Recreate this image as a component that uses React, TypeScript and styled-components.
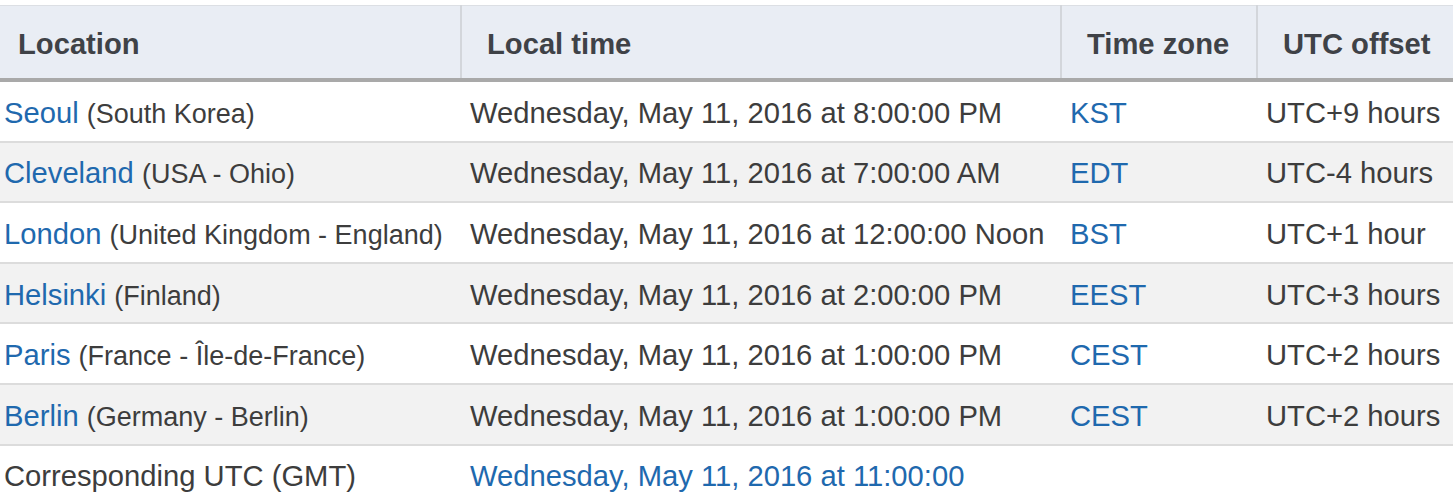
import React from "react";
import styled, { createGlobalStyle } from "styled-components";

const GlobalStyle = createGlobalStyle`
	html, body {
		margin: 0;
		padding: 0;
		background: #ffffff;
		overflow: hidden;
	}
	body {
		font-family: "Liberation Sans", Arial, Helvetica, sans-serif;
	}
`;

const Page = styled.div`
	padding-top: 5px;
	width: 1453px;
	overflow: hidden;
`;

const Table = styled.table`
	border-collapse: collapse;
	table-layout: fixed;
	width: 1480px;
	font-size: 29.2px;
	color: #3d3d3d;
	border-top: 1px solid #dcdfe4;
`;

const HeadCell = styled.th`
	background: #e9edf4;
	color: #3f4247;
	font-weight: bold;
	text-align: left;
	height: 68px;
	padding: 4px 0 0 25px;
	border-left: 2px solid #d3d6db;
	border-bottom: 4px solid #a9a9a9;
	white-space: nowrap;
	vertical-align: middle;

	&:first-child {
		padding-left: 18px;
		border-left: none;
	}
`;

const Row = styled.tr<{ $shaded: boolean }>`
	background: ${(props) => (props.$shaded ? "#f2f2f2" : "#ffffff")};
`;

const Cell = styled.td<{ $last?: boolean }>`
	height: 54.6px;
	padding: 4px 0 0 9px;
	white-space: nowrap;
	vertical-align: middle;
	border-bottom: ${(props) => (props.$last ? "none" : "2px solid #dcdcdc")};
	overflow: hidden;

	&:first-child {
		padding-left: 4px;
	}
`;

const Link = styled.a`
	color: #1f69ae;
	text-decoration: none;
`;

const Country = styled.span`
	font-size: 27px;
	color: #3d3d3d;
`;

interface CityRow {
	city: string;
	country: string;
	time: string;
	zone: string;
	offset: string;
}

const rows: CityRow[] = [
	{ city: "Seoul", country: "(South Korea)", time: "Wednesday, May 11, 2016 at 8:00:00 PM", zone: "KST", offset: "UTC+9 hours" },
	{ city: "Cleveland", country: "(USA - Ohio)", time: "Wednesday, May 11, 2016 at 7:00:00 AM", zone: "EDT", offset: "UTC-4 hours" },
	{ city: "London", country: "(United Kingdom - England)", time: "Wednesday, May 11, 2016 at 12:00:00 Noon", zone: "BST", offset: "UTC+1 hour" },
	{ city: "Helsinki", country: "(Finland)", time: "Wednesday, May 11, 2016 at 2:00:00 PM", zone: "EEST", offset: "UTC+3 hours" },
	{ city: "Paris", country: "(France - Île-de-France)", time: "Wednesday, May 11, 2016 at 1:00:00 PM", zone: "CEST", offset: "UTC+2 hours" },
	{ city: "Berlin", country: "(Germany - Berlin)", time: "Wednesday, May 11, 2016 at 1:00:00 PM", zone: "CEST", offset: "UTC+2 hours" },
];

const App = () => {
	return (
		<Page>
			<GlobalStyle />
			<Table>
				<colgroup>
					<col style={{ width: 461 }} />
					<col style={{ width: 600 }} />
					<col style={{ width: 196 }} />
					<col style={{ width: 223 }} />
				</colgroup>
				<thead>
					<tr>
						<HeadCell>Location</HeadCell>
						<HeadCell>Local time</HeadCell>
						<HeadCell>Time zone</HeadCell>
						<HeadCell>UTC offset</HeadCell>
					</tr>
				</thead>
				<tbody>
					{rows.map((r, i) => (
						<Row key={r.city} $shaded={i % 2 === 1}>
							<Cell>
								<Link href="#">{r.city}</Link> <Country>{r.country}</Country>
							</Cell>
							<Cell>{r.time}</Cell>
							<Cell>
								<Link href="#">{r.zone}</Link>
							</Cell>
							<Cell>{r.offset}</Cell>
						</Row>
					))}
					<Row $shaded={false}>
						<Cell $last>Corresponding UTC (GMT)</Cell>
						<Cell $last colSpan={3}>
							<Link href="#">Wednesday, May 11, 2016 at 11:00:00</Link>
						</Cell>
					</Row>
				</tbody>
			</Table>
		</Page>
	);
};

export default App;
